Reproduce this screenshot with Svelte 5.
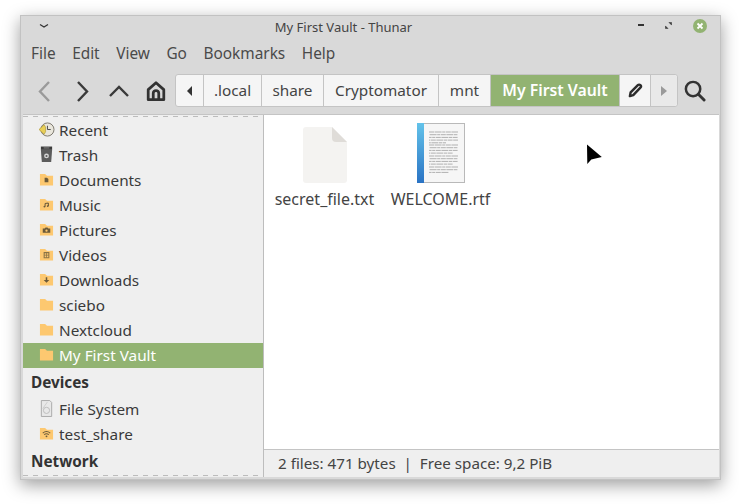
<script lang="ts">
	const menu = ['File', 'Edit', 'View', 'Go', 'Bookmarks', 'Help'];
	const crumbs = ['.local', 'share', 'Cryptomator', 'mnt'];
	const places = [
		{ name: 'Recent', icon: 'recent' },
		{ name: 'Trash', icon: 'trash' },
		{ name: 'Documents', icon: 'doc' },
		{ name: 'Music', icon: 'music' },
		{ name: 'Pictures', icon: 'camera' },
		{ name: 'Videos', icon: 'video' },
		{ name: 'Downloads', icon: 'down' },
		{ name: 'sciebo', icon: 'plain' },
		{ name: 'Nextcloud', icon: 'plain' },
		{ name: 'My First Vault', icon: 'plain', active: true }
	];
	const devices = [
		{ name: 'File System', icon: 'disk' },
		{ name: 'test_share', icon: 'wifi' }
	];
	// y start, line count and last line width of each paragraph in the rtf preview
	const paragraphs = [
		{ y: 9, lines: 5, last: 17 },
		{ y: 22, lines: 4, last: 24 },
		{ y: 33, lines: 4, last: 24 },
		{ y: 44, lines: 3, last: 20 }
	];
</script>

{#snippet placeIcon(icon)}
	{#if icon === 'recent'}
		<svg class="icon" viewBox="0 0 16 16">
			<circle cx="9" cy="8" r="7" fill="#e9e6dc" stroke="#77736a" />
			<path d="M9 4v4h3.500" fill="none" stroke="#444" />
			<path d="M0 8l5.500-5 1.500 2.500v5L5.500 13z" fill="#e8cf58" stroke="#a58f2a" stroke-width=".6" />
		</svg>
	{:else if icon === 'trash'}
		<svg class="icon" viewBox="0 0 16 16">
			<path d="M2 3h12l-1 13H3z" fill="#5c5c5c" />
			<path d="M2 -.5h12v3.500H2z" fill="#3c3c3c" />
			<path d="M5 .5h6v1H5z" fill="#8a8a8a" />
			<circle cx="8" cy="9.500" r="2.600" fill="#d5d5d5" />
			<circle cx="8" cy="9.500" r="1.100" fill="#5c5c5c" />
		</svg>
	{:else if icon === 'disk'}
		<svg class="icon" viewBox="0 0 16 16">
			<path d="M2.500 -.5h9l2 2v15h-11z" fill="#e8e8e8" stroke="#a8a8a8" />
			<circle cx="8" cy="10" r="3.300" fill="none" stroke="#bbb" />
			<path d="M4 8l5-7" stroke="#ccc" />
		</svg>
	{:else}
		<svg class="icon" viewBox="0 0 16 16">
			<path d="M1 2h5.500l2 2H15v10.500H1z" fill="#fdc870" />
			{#if icon === 'doc'}
				<path d="M6 6h2.500l1.500 1.500V11H6z" fill="#6b5a3a" />
			{:else if icon === 'music'}
				<path d="M6.500 7v3M10 6.500v3M6.500 7l3.500-.5" fill="none" stroke="#6b5a3a" stroke-width="1.100" />
				<circle cx="5.800" cy="10.200" r="1" fill="#6b5a3a" />
				<circle cx="9.300" cy="9.700" r="1" fill="#6b5a3a" />
			{:else if icon === 'camera'}
				<path d="M4 7h2l1-1.200h2L10 7h2v4.500H4z" fill="#6b5a3a" />
				<circle cx="8" cy="9.200" r="1.200" fill="#fdc870" />
			{:else if icon === 'video'}
				<path d="M5.500 6h5v5.500h-5z" fill="none" stroke="#8a7346" stroke-width="1.100" />
				<path d="M5.500 8.700h5M8 6v5.500" stroke="#8a7346" stroke-width=".8" />
			{:else if icon === 'down'}
				<path d="M7.200 5.500h1.600v3H11L8 11.500 5 8.500h2.200z" fill="#6b5a3a" />
			{:else if icon === 'wifi'}
				<path d="M4 7.500c2.500-2 5.500-2 8 0M5.500 9.200c1.500-1.200 3.500-1.200 5 0" fill="none" stroke="#6b5a3a" stroke-width="1.100" />
				<circle cx="8" cy="11" r="1" fill="#6b5a3a" />
			{/if}
		</svg>
	{/if}
{/snippet}

<div class="window">
	<header class="titlebar">
		<svg class="win-menu" viewBox="0 0 10 6"><path d="M1 1.500l4 2.500 4-2.500" fill="none" stroke="#333" stroke-width="1.300" /></svg>
		<span class="title">My First Vault - Thunar</span>
		<div class="win-controls">
			<span class="minimize"></span>
			<svg class="maximize" viewBox="0 0 8 8">
				<path d="M4.500 .5h3v3zM.5 4.500v3h3z" fill="#333" stroke="#333" stroke-width=".6" />
			</svg>
			<svg class="close" viewBox="0 0 14 14">
				<circle cx="7" cy="7" r="7" fill="#92b372" />
				<path d="M4.500 4.500l5 5M9.500 4.500l-5 5" stroke="#fff" stroke-width="1.800" />
			</svg>
		</div>
	</header>

	<nav class="menubar">
		{#each menu as item}
			<span>{item}</span>
		{/each}
	</nav>

	<div class="toolbar">
		<div class="nav-buttons">
			<svg viewBox="0 0 24 24" class="tool"><path d="M16 3L7 12.500l9 9.500" fill="none" stroke="#9a9a9a" stroke-width="2.400" /></svg>
			<svg viewBox="0 0 24 24" class="tool"><path d="M8 3l9 9.500L8 22" fill="none" stroke="#3a3a3a" stroke-width="2.400" /></svg>
			<svg viewBox="0 0 24 24" class="tool"><path d="M3 17l9-9 9 9" fill="none" stroke="#3a3a3a" stroke-width="2.400" /></svg>
			<svg viewBox="0 0 24 24" class="tool home">
				<path d="M12 3L3.500 10.500V21.500h17V10.500z" fill="none" stroke="#333" stroke-width="3" stroke-linejoin="round" />
				<path d="M9 21.500v-7a3 3 0 016 0v7" fill="none" stroke="#333" stroke-width="3" />
			</svg>
		</div>
		<div class="pathbar">
			<div class="crumb arrow">
				<svg viewBox="0 0 6 10" class="tri"><path d="M5 0v10L0 5z" fill="#333" /></svg>
			</div>
			{#each crumbs as crumb, i}
				<div class="crumb c{i}">{crumb}</div>
			{/each}
			<div class="crumb current">My First Vault</div>
			<div class="crumb pencil">
				<svg viewBox="0 0 16 16"><path d="M2 14l.8-4L10.500 2.300a1.700 1.700 0 012.700 2.700L5.600 13z" fill="none" stroke="#2c2c2c" stroke-width="2.600" stroke-linejoin="round" /></svg>
			</div>
			<div class="crumb arrow end">
				<svg viewBox="0 0 6 10" class="tri"><path d="M0 0v10l6-5z" fill="#9a9a9a" /></svg>
			</div>
		</div>
		<svg viewBox="0 0 24 24" class="search">
			<circle cx="10.500" cy="10.500" r="7.500" fill="none" stroke="#333" stroke-width="2.600" />
			<path d="M16 16l6 6" stroke="#333" stroke-width="3" stroke-linecap="round" />
		</svg>
	</div>

	<div class="body">
		<aside class="sidebar">
			<ul>
				{#each places as place}
					<li class:active={place.active}>
						{@render placeIcon(place.icon)}
						<span>{place.name}</span>
					</li>
				{/each}
			</ul>
			<h3 class="devices">Devices</h3>
			<ul>
				{#each devices as device}
					<li>
						{@render placeIcon(device.icon)}
						<span>{device.name}</span>
					</li>
				{/each}
			</ul>
			<h3 class="network">Network</h3>
		</aside>

		<main class="content">
			<div class="files">
				<div class="file">
					<svg class="thumb" viewBox="0 0 44 56">
						<path d="M3 0h26l15 15v38a3 3 0 01-3 3H3a3 3 0 01-3-3V3a3 3 0 013-3z" fill="#f4f3f1" />
						<path d="M29 0l15 15H33a4 4 0 01-4-4z" fill="#dfdcd8" />
					</svg>
					<span>secret_file.txt</span>
				</div>
				<div class="file rtf">
					<svg class="thumb" viewBox="0 0 48 60">
						<defs>
							<linearGradient id="spine" x1="0" y1="0" x2="0" y2="1">
								<stop offset="0" stop-color="#63c3ea" />
								<stop offset="1" stop-color="#2a73c4" />
							</linearGradient>
						</defs>
						<rect x=".5" y=".5" width="47" height="59" fill="#f6f6f6" stroke="#b9b9b9" />
						<rect x="0" y="0" width="7" height="60" fill="url(#spine)" />
						{#each paragraphs as p}
							{#each Array(p.lines) as _, n}
								<path
									d="M12 {p.y + n * 2.7}h{n === p.lines - 1 ? p.last : 29}"
									stroke="#b0b0b0"
									stroke-width="1"
									stroke-dasharray="5 .6 7 .6 3 .6"
									stroke-dashoffset={n * 5}
								/>
							{/each}
						{/each}
					</svg>
					<span>WELCOME.rtf</span>
				</div>
			</div>
			<svg class="cursor" viewBox="0 0 20 26">
				<path d="M3 2.500l.3 19.500 4-4.500 10.500-2.500z" fill="#000" stroke="#fff" stroke-width="2" stroke-linejoin="round" paint-order="stroke" />
			</svg>
			<footer class="status">2 files: 471 bytes&nbsp;&nbsp;|&nbsp;&nbsp;Free space: 9,2 PiB</footer>
		</main>
	</div>
</div>

<style>
	:global(body) {
		background: #fff;
		overflow: hidden;
		min-height: 504px;
	}

	.window {
		width: 701px;
		height: 465px;
		margin: 15px 0 0 20px;
		box-sizing: border-box;
		display: flex;
		flex-direction: column;
		background: #d9d9d9;
		border: 1px solid #c2c2c2;
		box-shadow: 0 5px 16px rgba(0, 0, 0, 0.38);
		font-family: 'Noto Sans', sans-serif;
		font-size: 15.3px;
		color: #3a3a3a;
		overflow: hidden;
	}

	.titlebar {
		height: 24px;
		flex: none;
		box-sizing: border-box;
		display: flex;
		align-items: center;
		justify-content: center;
		position: relative;
		padding: 0 54px 2px 0;
	}

	.title {
		font-size: 13px;
		color: #444;
	}

	.win-menu {
		position: absolute;
		left: 18px;
		top: 7px;
		width: 10px;
		height: 6px;
	}

	.win-controls {
		position: absolute;
		right: 13px;
		top: 3px;
		display: flex;
		align-items: center;
		gap: 21px;
	}

	.minimize {
		width: 6px;
		height: 2px;
		background: #333;
		margin-top: -2px;
	}

	.maximize {
		width: 7px;
		height: 7px;
		margin-top: -1px;
	}

	.close {
		width: 14px;
		height: 14px;
	}

	.menubar {
		height: 26px;
		flex: none;
		display: flex;
		align-items: center;
		gap: 16.5px;
		padding-left: 10px;
		color: #4a4a4a;
		font-size: 15.4px;
	}

	.toolbar {
		height: 48px;
		flex: none;
		display: flex;
		align-items: center;
		box-sizing: border-box;
		padding: 8px 0 7px 12px;
	}

	.nav-buttons {
		display: flex;
		align-items: center;
		gap: 13px;
		margin-right: 8px;
	}

	.tool {
		width: 24px;
		height: 24px;
	}

	.home {
		width: 22px;
		height: 24px;
		margin-left: 1px;
	}

	.pathbar {
		display: flex;
		height: 33px;
		box-sizing: border-box;
		border: 1px solid #c4c4c4;
		border-radius: 3px;
		background: #f5f5f5;
		width: 503px;
	}

	.crumb {
		display: flex;
		align-items: center;
		justify-content: center;
		box-sizing: border-box;
		border-right: 1px solid #c4c4c4;
		color: #444;
		padding-bottom: 2px;
	}

	.crumb.arrow {
		width: 28px;
		padding-bottom: 0;
	}

	.crumb.arrow.end {
		width: 26px;
		border-right: 0;
		background: #e9e9e9;
		border-radius: 0 3px 3px 0;
	}

	.tri {
		width: 6px;
		height: 10px;
	}

	.c0 {
		width: 58px;
	}

	.c1 {
		width: 62px;
	}

	.c2 {
		width: 115px;
	}

	.c3 {
		width: 52px;
	}

	.crumb.current {
		width: 129px;
		background: #92b372;
		color: #fff;
		font-weight: 600;
		font-size: 15.8px;
	}

	.crumb.pencil {
		width: 31px;
		padding-bottom: 0;
	}

	.pencil svg {
		width: 15px;
		height: 15px;
	}

	.search {
		width: 23px;
		height: 23px;
		margin-left: 5px;
	}

	.body {
		flex: 1;
		min-height: 0;
		display: flex;
		margin: 0 1px 2px 2px;
		border-top: 1px solid #c4c4c4;
	}

	.sidebar {
		width: 241px;
		flex: none;
		box-sizing: border-box;
		background: #efefef;
		border-right: 1px solid #bdbdbd;
		padding-top: 3px;
		background-image:
			repeating-linear-gradient(90deg, #bcbcbc 0 5px, transparent 5px 10px),
			repeating-linear-gradient(90deg, #bcbcbc 0 5px, transparent 5px 10px);
		background-size:
			100% 1px,
			100% 1px;
		background-position:
			0 1px,
			0 calc(100% - 1px);
		background-repeat: no-repeat;
	}

	ul {
		list-style: none;
		margin: 0;
		padding: 0;
	}

	li {
		height: 25px;
		box-sizing: border-box;
		display: flex;
		align-items: center;
		gap: 5px;
		padding: 0 0 2px 16px;
	}

	li.active {
		background: #92b372;
		color: #fff;
	}

	.icon {
		width: 15px;
		height: 15px;
		flex: none;
		overflow: visible;
	}

	h3 {
		margin: 0;
		font-size: 15.3px;
		font-weight: 700;
		color: #333;
		padding-left: 8px;
	}

	.devices {
		height: 29px;
		line-height: 28px;
	}

	.network {
		height: 29px;
		line-height: 29px;
	}

	.content {
		flex: 1;
		min-width: 0;
		background: #fff;
		display: flex;
		flex-direction: column;
		position: relative;
	}

	.files {
		flex: 1;
		display: flex;
		padding: 8px 0 0 8px;
		gap: 11px;
	}

	.file {
		width: 105px;
		display: flex;
		flex-direction: column;
		align-items: center;
		gap: 5px;
		color: #444;
		font-size: 16px;
		white-space: nowrap;
	}

	.thumb {
		width: 44px;
		height: 60px;
		padding-top: 4px;
		box-sizing: border-box;
		flex: none;
	}

	.rtf .thumb {
		width: 48px;
		padding-top: 0;
	}

	.cursor {
		position: absolute;
		left: 320px;
		top: 27px;
		width: 20px;
		height: 26px;
	}

	.status {
		height: 28px;
		flex: none;
		box-sizing: border-box;
		display: flex;
		align-items: center;
		border-top: 1px solid #c4c4c4;
		background: #efefef;
		padding: 0 0 2px 14px;
		color: #444;
		white-space: pre;
		font-size: 15.2px;
	}
</style>
